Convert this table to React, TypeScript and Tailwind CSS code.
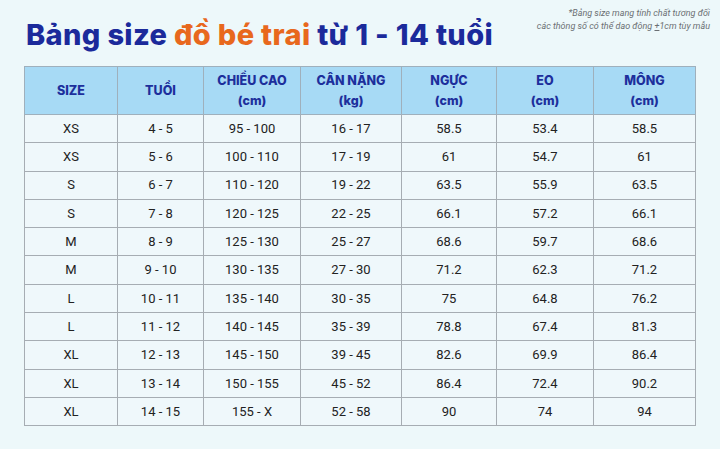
import React from "react";

const rows: string[][] = [
  ["XS", "4 - 5", "95 - 100", "16 - 17", "58.5", "53.4", "58.5"],
  ["XS", "5 - 6", "100 - 110", "17 - 19", "61", "54.7", "61"],
  ["S", "6 - 7", "110 - 120", "19 - 22", "63.5", "55.9", "63.5"],
  ["S", "7 - 8", "120 - 125", "22 - 25", "66.1", "57.2", "66.1"],
  ["M", "8 - 9", "125 - 130", "25 - 27", "68.6", "59.7", "68.6"],
  ["M", "9 - 10", "130 - 135", "27 - 30", "71.2", "62.3", "71.2"],
  ["L", "10 - 11", "135 - 140", "30 - 35", "75", "64.8", "76.2"],
  ["L", "11 - 12", "140 - 145", "35 - 39", "78.8", "67.4", "81.3"],
  ["XL", "12 - 13", "145 - 150", "39 - 45", "82.6", "69.9", "86.4"],
  ["XL", "13 - 14", "150 - 155", "45 - 52", "86.4", "72.4", "90.2"],
  ["XL", "14 - 15", "155 - X", "52 - 58", "90", "74", "94"],
];

const headers: [string, string | null][] = [
  ["SIZE", null],
  ["TUỔI", null],
  ["CHIỀU CAO", "(cm)"],
  ["CÂN NẶNG", "(kg)"],
  ["NGỰC", "(cm)"],
  ["EO", "(cm)"],
  ["MÔNG", "(cm)"],
];

export default function App() {
  return (
    <div className="w-[720px] h-[449px] bg-[#edf8fa] overflow-hidden relative">
      <div className="flex justify-between items-start pl-[26px] pr-[10px]">
        <h1 className="mt-[15px] text-[29px] leading-[40px] font-extrabold tracking-[0.35px] text-[#1b2a9b] [font-family:Inter,'Noto_Sans',sans-serif]">
          Bảng size <span className="text-[#e8681d]">đồ bé trai</span> từ 1 - 14 tuổi
        </h1>
        <div className="mt-[7px] text-right italic text-[9px] leading-[13px] text-[#6b6f73] [font-family:Roboto,sans-serif]">
          <div>*Bảng size mang tính chất tương đối</div>
          <div>
            các thông số có thể dao động <span className="underline">+</span>1cm tùy mẫu
          </div>
        </div>
      </div>
      <div className="ml-[24px] mt-[11px] w-[671px]">
        <table className="w-full border-collapse table-fixed [font-family:Roboto,sans-serif]">
          <colgroup>
            <col className="w-[93px]" />
            <col className="w-[86px]" />
            <col className="w-[97px]" />
            <col className="w-[101px]" />
            <col className="w-[95px]" />
            <col className="w-[97px]" />
            <col className="w-[102px]" />
          </colgroup>
          <thead>
            <tr className="h-[48px] bg-[#a7daf5]">
              {headers.map(([a, b], i) => (
                <th
                  key={i}
                  className="border border-[#9fb0bc] text-[#1d2f9c] font-extrabold text-[12.5px] leading-[20px] text-center align-middle [font-family:Inter,sans-serif]"
                >
                  <div>{a}</div>
                  {b && <div>{b}</div>}
                </th>
              ))}
            </tr>
          </thead>
          <tbody>
            {rows.map((r, ri) => (
              <tr key={ri} className="h-[28.3px] bg-[#eff8fb]">
                {r.map((c, ci) => (
                  <td
                    key={ci}
                    className="border border-[#a6adb3] text-center text-[13px] text-[#222] p-0 align-middle"
                  >
                    {c}
                  </td>
                ))}
              </tr>
            ))}
          </tbody>
        </table>
      </div>
    </div>
  );
}
